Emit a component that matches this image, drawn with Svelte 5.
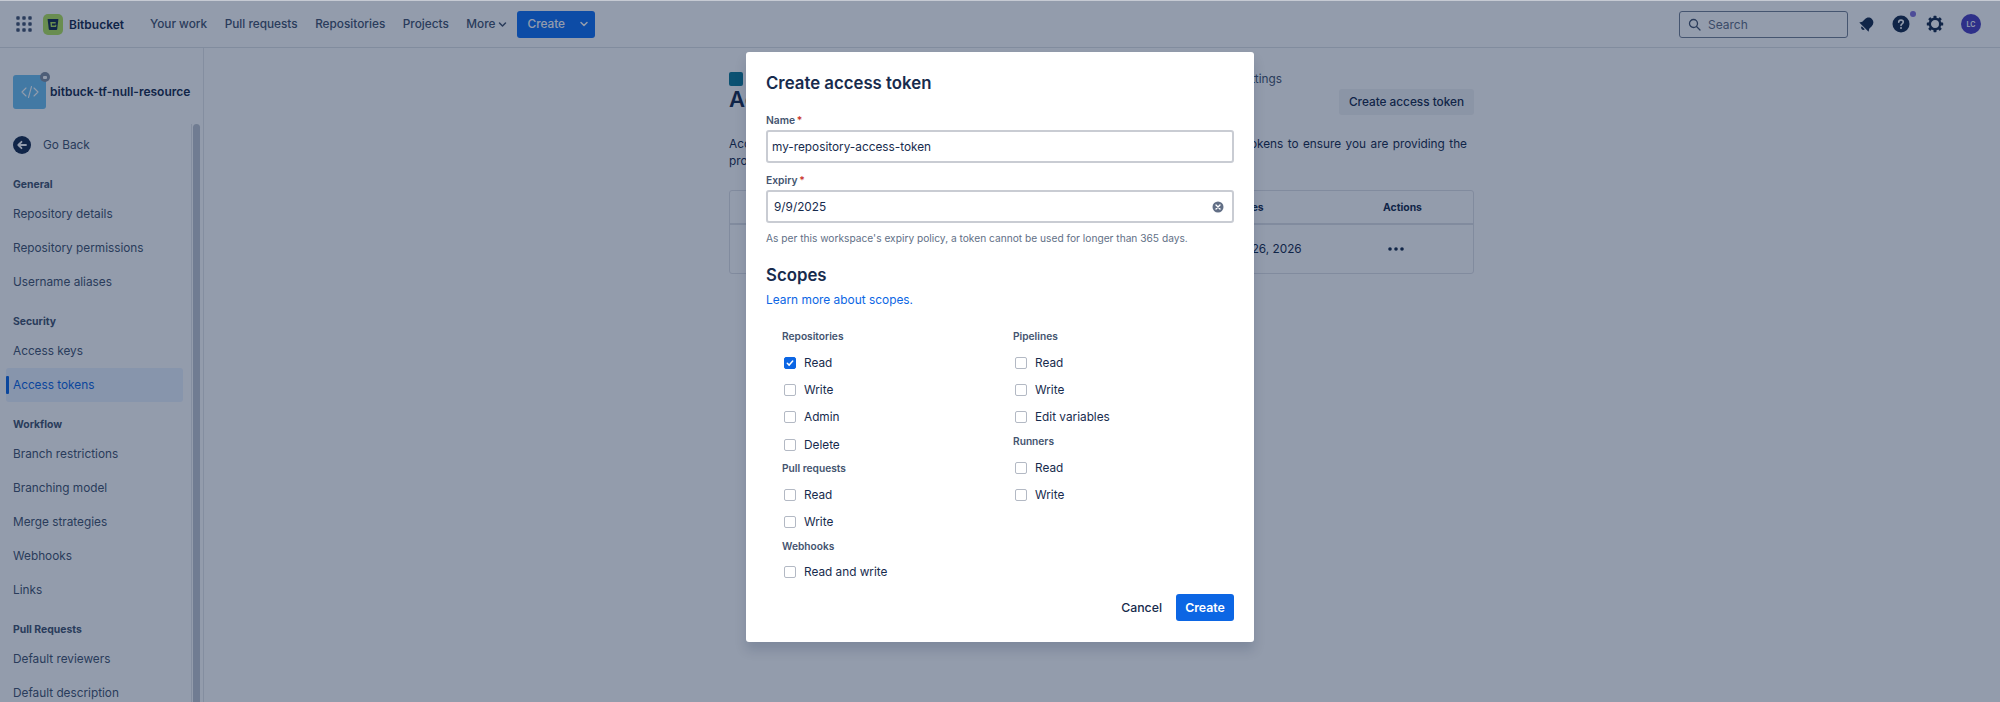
<script>
  const navLinks = ['Your work', 'Pull requests', 'Repositories', 'Projects'];
  const sideGroups = [
    { title: 'General', items: ['Repository details', 'Repository permissions', 'Username aliases'] },
    { title: 'Security', items: ['Access keys', 'Access tokens'] },
    { title: 'Workflow', items: ['Branch restrictions', 'Branching model', 'Merge strategies', 'Webhooks', 'Links'] },
    { title: 'Pull Requests', items: ['Default reviewers', 'Default description'] }
  ];
  const scopeCols = [
    [
      { title: 'Repositories', opts: ['Read', 'Write', 'Admin', 'Delete'], checked: 'Read' },
      { title: 'Pull requests', opts: ['Read', 'Write'] },
      { title: 'Webhooks', opts: ['Read and write'] }
    ],
    [
      { title: 'Pipelines', opts: ['Read', 'Write', 'Edit variables'] },
      { title: 'Runners', opts: ['Read', 'Write'] }
    ]
  ];
</script>

<div class="app">
  <div class="strip"></div>
  <header class="nav">
    <svg class="grid-icon" width="16" height="16" viewBox="0 0 16 16" aria-hidden="true">
      {#each [2, 8, 14] as y}
        {#each [2, 8, 14] as x}
          <rect x={x - 1.7} y={y - 1.7} width="3.4" height="3.4" rx="0.8" fill="#44546F" />
        {/each}
      {/each}
    </svg>
    <svg class="logo" width="20" height="21" viewBox="0 0 20 21" aria-hidden="true">
      <rect width="20" height="21" rx="5" fill="#b4e45c" />
      <path d="M4.6 5h10.8l-1.2 10.2c-.1.5-.4.8-.9.8H6.700c-.5 0-.8-.3-.9-.8z" fill="#172B4D" />
      <path d="M7.300 8h5.400v1.500H9v2h3.200l.2-1 1 .6-.4 2H7.800z" fill="#b4e45c" />
    </svg>
    <span class="brand">Bitbucket</span>
    <nav class="links">
      {#each navLinks as l}<span>{l}</span>{/each}
      <span class="more">More
        <svg width="9" height="9" viewBox="0 0 9 9" aria-hidden="true"><path d="M1.500 3l3 3 3-3" fill="none" stroke="#44546F" stroke-width="1.500" stroke-linecap="round" stroke-linejoin="round" /></svg>
      </span>
    </nav>
    <div class="nav-create">
      <span>Create</span>
      <svg width="10" height="10" viewBox="0 0 10 10" aria-hidden="true"><path d="M2 3.500l3 3 3-3" fill="none" stroke="#fff" stroke-width="1.500" stroke-linecap="round" stroke-linejoin="round" /></svg>
    </div>
    <div class="nav-spacer"></div>
    <div class="search">
      <svg width="13" height="13" viewBox="0 0 13 13" aria-hidden="true"><circle cx="5.500" cy="5.500" r="4" fill="none" stroke="#44546F" stroke-width="1.300" /><path d="M8.500 8.500l3.500 3.500" stroke="#44546F" stroke-width="1.300" stroke-linecap="round" /></svg>
      <span>Search</span>
    </div>
    <svg class="bell" width="17" height="17" viewBox="0 0 16 16" aria-hidden="true">
      <g transform="rotate(45 8 8)"><path d="M8 0.800c2.900 0 4.600 2.100 4.600 4.800v3.400l1.600 2.400H1.800l1.600-2.400V5.600C3.400 2.900 5.100 0.800 8 0.800z" fill="#172B4D" /><path d="M6 12.300h4a2 2 0 0 1-4 0z" fill="#172B4D" /></g>
    </svg>
    <div class="help">
      <svg width="18" height="18" viewBox="0 0 18 18" aria-hidden="true">
        <circle cx="9" cy="9" r="8.500" fill="#172B4D" />
        <path d="M6.700 7.200c0-1.300 1-2.100 2.300-2.100s2.300.8 2.300 2c0 1.800-2.300 1.700-2.300 3.400" fill="none" stroke="#fff" stroke-width="1.600" stroke-linecap="round" />
        <circle cx="9" cy="13" r="1" fill="#fff" />
      </svg>
      <i class="dot"></i>
    </div>
    <svg class="gear" width="18" height="18" viewBox="0 0 18 18" aria-hidden="true">
      <circle cx="9" cy="9" r="5.200" fill="none" stroke="#172B4D" stroke-width="2.400" />
      {#each [0, 45, 90, 135, 180, 225, 270, 315] as a}
        <rect x="7.500" y="0.800" width="3" height="3" rx="0.600" fill="#172B4D" transform="rotate({a} 9 9)" />
      {/each}
    </svg>
    <div class="avatar">LC</div>
  </header>

  <div class="body">
    <aside class="sidebar">
      <div class="repo">
        <div class="repo-icon">
          <svg width="18" height="14" viewBox="0 0 18 14" aria-hidden="true"><path d="M5 3L1 7l4 4M13 3l4 4-4 4M10.500 1.500l-3 11" fill="none" stroke="#fff" stroke-width="1.100" stroke-linecap="round" stroke-linejoin="round" /></svg>
          <span class="lock"><i></i></span>
        </div>
        <span class="repo-name">bitbuck-tf-null-resource</span>
      </div>
      <div class="scroll">
        <div class="menu">
          <div class="back">
            <svg width="18" height="18" viewBox="0 0 18 18" aria-hidden="true">
              <circle cx="9" cy="9" r="9" fill="#172B4D" />
              <path d="M13 9H5.500M8.500 5.800L5.300 9l3.200 3.200" fill="none" stroke="#fff" stroke-width="1.800" stroke-linecap="round" stroke-linejoin="round" />
            </svg>
            <span>Go Back</span>
          </div>
          {#each sideGroups as g}
            <div class="side-title">{g.title}</div>
            {#each g.items as it}
              <div class="side-item" class:active={it === 'Access tokens'}>{it}</div>
            {/each}
          {/each}
        </div>
        <div class="track"><div class="thumb"></div></div>
      </div>
    </aside>

    <main class="main">
      <div class="crumb">
        <span class="crumb-icon"></span>
        <span class="crumb-text">bitbuck-tf-null-resource / Repository settings</span>
      </div>
      <div class="title-row">
        <h1>Access tokens</h1>
        <div class="ghost-btn">Create access token</div>
      </div>
      <p class="intro">Access tokens are linked to this repository. Please also review the permissions granted to tokens to ensure you are providing the proper level of access.</p>
      <div class="table">
        <div class="thead">
          <span>Name</span><span>Expires</span><span>Actions</span>
        </div>
        <div class="trow">
          <span>my-token</span><span>Aug 26, 2026</span>
          <svg class="dots" width="16" height="4" viewBox="0 0 16 4" aria-hidden="true"><circle cx="2" cy="2" r="1.800" fill="#172B4D" /><circle cx="8" cy="2" r="1.800" fill="#172B4D" /><circle cx="14" cy="2" r="1.800" fill="#172B4D" /></svg>
        </div>
      </div>
    </main>
  </div>

  <div class="overlay">
    <section class="modal">
      <h2>Create access token</h2>
      <div class="label first">Name <b>*</b></div>
      <div class="input">my-repository-access-token</div>
      <div class="label">Expiry <b>*</b></div>
      <div class="input date">
        <span>9/9/2025</span>
        <svg width="12" height="12" viewBox="0 0 12 12" aria-hidden="true"><circle cx="6" cy="6" r="5.500" fill="#626f86" /><path d="M4 4l4 4M8 4l-4 4" stroke="#fff" stroke-width="1.400" stroke-linecap="round" /></svg>
      </div>
      <div class="help-text">As per this workspace's expiry policy, a token cannot be used for longer than 365 days.</div>
      <h3>Scopes</h3>
      <div class="learn">Learn more about scopes.</div>
      <div class="scopes">
        {#each scopeCols as col}
          <div class="scope-col">
            {#each col as grp}
              <div class="scope-title">{grp.title}</div>
              <div class="scope-opts">
                {#each grp.opts as o}
                  <div class="opt">
                    {#if grp.checked === o}
                      <span class="box on"><svg width="10" height="10" viewBox="0 0 10 10" aria-hidden="true"><path d="M2.300 5.200l1.900 1.900 3.500-4" fill="none" stroke="#fff" stroke-width="1.500" stroke-linecap="round" stroke-linejoin="round" /></svg></span>
                    {:else}
                      <span class="box"></span>
                    {/if}
                    <span>{o}</span>
                  </div>
                {/each}
              </div>
            {/each}
          </div>
        {/each}
      </div>
      <div class="footer">
        <span class="cancel">Cancel</span>
        <span class="primary">Create</span>
      </div>
    </section>
  </div>
</div>

<style>
  :global(body) {
    margin: 0;
    overflow: hidden;
    background: #fff;
  }
  .app {
    position: relative;
    width: 2000px;
    height: 702px;
    overflow: hidden;
    display: flex;
    flex-direction: column;
    font-family: Inter, "Liberation Sans", sans-serif;
    font-size: 11.800px;
    color: #44546f;
  }
  .strip {
    height: 1px;
    flex: none;
    background: #c6cad3;
  }
  .nav {
    height: 46px;
    flex: none;
    display: flex;
    align-items: center;
    padding-left: 16px;
    border-bottom: 1px solid #dfe2e7;
    background: #fff;
  }
  .grid-icon { margin-right: 11px; }
  .logo { margin-right: 6px; }
  .brand {
    font-size: 12px;
    font-weight: 600;
    color: #172b4d;
    width: 54px;
    margin-right: 27px;
    white-space: nowrap;
  }
  .links {
    display: flex;
    gap: 17.500px;
    font-weight: 500;
    white-space: nowrap;
  }
  .more {
    display: flex;
    align-items: center;
    gap: 3px;
  }
  .nav-create {
    margin-left: 10px;
    width: 78px;
    height: 27px;
    box-sizing: border-box;
    padding-left: 10px;
    display: flex;
    align-items: center;
    gap: 14px;
    border-radius: 3px;
    background: #1170f5;
    color: #fff;
    font-weight: 500;
  }
  .nav-spacer { flex: 1; }
  .search {
    width: 169px;
    height: 27px;
    box-sizing: border-box;
    display: flex;
    align-items: center;
    gap: 7px;
    padding-left: 8px;
    border: 1px solid #758195;
    border-radius: 3px;
    color: #626f86;
    font-size: 12px;
    margin-right: 10px;
  }
  .bell { margin-right: 17px; }
  .help {
    position: relative;
    width: 18px;
    height: 18px;
    margin-right: 16px;
  }
  .help svg { display: block; }
  .dot {
    position: absolute;
    right: -6px;
    top: -4px;
    width: 6px;
    height: 6px;
    border-radius: 50%;
    background: #8270db;
  }
  .gear { margin-right: 17px; }
  .avatar {
    width: 20px;
    height: 20px;
    border-radius: 50%;
    background: #4c3fc0;
    color: #fff;
    font-size: 7px;
    font-weight: 600;
    display: flex;
    align-items: center;
    justify-content: center;
    margin-right: 19px;
  }
  .body {
    flex: 1;
    display: flex;
    min-height: 0;
  }
  .sidebar {
    width: 203px;
    flex: none;
    box-sizing: content-box;
    display: flex;
    flex-direction: column;
    border-right: 1px solid #e4e6ea;
    min-height: 0;
  }
  .repo {
    height: 76px;
    flex: none;
    box-sizing: border-box;
    padding: 27px 0 0 13px;
    display: flex;
    align-items: flex-start;
    gap: 4px;
  }
  .repo-icon {
    position: relative;
    width: 33px;
    height: 34px;
    border-radius: 3px;
    background: #6fc0f0;
    display: flex;
    align-items: center;
    justify-content: center;
  }
  .lock {
    position: absolute;
    right: -4px;
    top: -3px;
    width: 10px;
    height: 10px;
    border-radius: 50%;
    background: #8590a2;
    display: flex;
    align-items: center;
    justify-content: center;
  }
  .lock i {
    width: 4px;
    height: 3px;
    background: #fff;
    border-radius: 1px;
  }
  .repo-name {
    font-size: 12px;
    font-weight: 600;
    color: #172b4d;
    line-height: 34px;
    white-space: nowrap;
  }
  .scroll {
    flex: 1;
    display: flex;
    min-height: 0;
  }
  .menu {
    width: 191px;
    flex: none;
    box-sizing: border-box;
    padding: 4px 0 0 6px;
    overflow: hidden;
  }
  .back {
    height: 34px;
    display: flex;
    align-items: center;
    gap: 12px;
    padding-left: 7px;
  }
  .side-title {
    height: 20px;
    line-height: 20px;
    margin: 13px 0 2px 7px;
    font-size: 10.400px;
    font-weight: 700;
  }
  .side-item {
    position: relative;
    width: 177px;
    height: 34px;
    box-sizing: border-box;
    line-height: 34px;
    padding-left: 7px;
    border-radius: 3px;
    white-space: nowrap;
  }
  .side-item.active {
    background: #e9f2ff;
    color: #0c66e4;
  }
  .side-item.active::before {
    content: "";
    position: absolute;
    left: 0;
    top: 8px;
    width: 3px;
    height: 18px;
    border-radius: 1px;
    background: #0c66e4;
  }
  .track {
    flex: 1;
    border-left: 1px solid #e4e6ea;
    box-sizing: border-box;
  }
  .thumb {
    width: 7px;
    height: 100%;
    margin-left: 1px;
    border-radius: 4px 4px 0 0;
    background: #c1c7d0;
  }
  .main {
    flex: 1;
    box-sizing: border-box;
    padding: 23px 0 0 525px;
    min-width: 0;
  }
  .crumb {
    width: 553px;
    height: 16px;
    display: flex;
    align-items: center;
    justify-content: space-between;
  }
  .crumb-icon {
    width: 14px;
    height: 14px;
    border-radius: 2px;
    background: #0e7a98;
  }
  .crumb-text {
    white-space: nowrap;
  }
  .title-row {
    width: 745px;
    display: flex;
    justify-content: space-between;
    align-items: flex-start;
    height: 27px;
    margin-top: 2px;
  }
  h1 {
    margin: -4px 0 0;
    font-size: 22px;
    line-height: 28px;
    font-weight: 600;
    color: #172b4d;
  }
  .ghost-btn {
    width: 135px;
    height: 26px;
    line-height: 26px;
    text-align: center;
    border-radius: 3px;
    background: #f1f2f4;
    font-weight: 500;
    white-space: nowrap;
    color: #172b4d;
  }
  .intro {
    width: 738px;
    margin: 20px 0 0;
    line-height: 17px;
    color: #172b4d;
    text-align: justify;
  }
  .table {
    width: 745px;
    box-sizing: border-box;
    margin-top: 20px;
    border: 1px solid #dfe1e6;
    border-radius: 3px;
  }
  .thead,
  .trow {
    display: grid;
    grid-template-columns: 496px 157px 1fr;
    align-items: center;
    white-space: nowrap;
    padding-left: 0;
  }
  .thead span:first-child,
  .trow span:first-child {
    padding-left: 60px;
  }
  .thead {
    height: 34px;
    box-sizing: border-box;
    border-bottom: 2px solid #dfe1e6;
    font-size: 10.400px;
    font-weight: 700;
    color: #172b4d;
  }
  .trow {
    height: 48px;
    color: #172b4d;
  }
  .dots { margin-left: 5px; }
  .overlay {
    position: absolute;
    inset: 1px 0 0 0;
    background: rgba(9, 30, 66, 0.44);
    display: flex;
    justify-content: center;
    align-items: flex-start;
    padding-top: 51px;
    box-sizing: border-box;
  }
  .modal {
    width: 508px;
    box-sizing: border-box;
    padding: 19px 20px 21px;
    border-radius: 3px;
    background: #fff;
    box-shadow: 0 8px 12px rgba(9, 30, 66, 0.15);
  }
  h2 {
    margin: 0;
    height: 24px;
    font-size: 16.800px;
    line-height: 24px;
    font-weight: 600;
    color: #172b4d;
  }
  .label {
    height: 14px;
    line-height: 14px;
    margin: 10px 0 3px;
    font-size: 10.300px;
    font-weight: 600;
    color: #44546f;
  }
  .label.first { margin-top: 18px; }
  .label b {
    color: #c9372c;
    font-weight: 600;
    margin-left: -1px;
  }
  .input {
    height: 33px;
    box-sizing: border-box;
    border: 2px solid #c9ccd3;
    border-radius: 3px;
    padding-left: 4px;
    display: flex;
    align-items: center;
    color: #172b4d;
  }
  .date {
    justify-content: space-between;
    padding: 0 8px 0 6px;
  }
  .help-text {
    height: 14px;
    line-height: 14px;
    margin-top: 8px;
    font-size: 10.200px;
    color: #626f86;
  }
  h3 {
    margin: 19px 0 0;
    height: 22px;
    line-height: 22px;
    font-size: 16.800px;
    font-weight: 600;
    color: #172b4d;
  }
  .learn {
    height: 16px;
    line-height: 16px;
    margin-top: 6px;
    font-size: 11.900px;
    color: #0c66e4;
  }
  .scopes {
    display: grid;
    grid-template-columns: 231px 1fr;
    margin-top: 20px;
    padding-left: 16px;
  }
  .scope-title {
    height: 16px;
    line-height: 16px;
    font-size: 10.200px;
    font-weight: 600;
    color: #44546f;
  }
  .scope-opts {
    padding: 5.400px 0 1.800px;
  }
  .opt {
    height: 27.200px;
    display: flex;
    align-items: center;
    gap: 8px;
    padding-left: 2px;
    color: #172b4d;
  }
  .box {
    width: 12px;
    height: 12px;
    box-sizing: border-box;
    border: 1px solid #b3b9c4;
    border-radius: 2px;
    display: flex;
    align-items: center;
    justify-content: center;
  }
  .box.on {
    background: #0c66e4;
    border-color: #0c66e4;
  }
  .footer {
    display: flex;
    justify-content: flex-end;
    align-items: center;
    gap: 14px;
    margin-top: 6.600px;
  }
  .cancel {
    font-size: 12.300px;
    font-weight: 500;
    color: #172b4d;
  }
  .primary {
    width: 58px;
    height: 27px;
    line-height: 27px;
    text-align: center;
    border-radius: 3px;
    background: #0c66e4;
    color: #fff;
    font-size: 12.300px;
    font-weight: 600;
  }
</style>
